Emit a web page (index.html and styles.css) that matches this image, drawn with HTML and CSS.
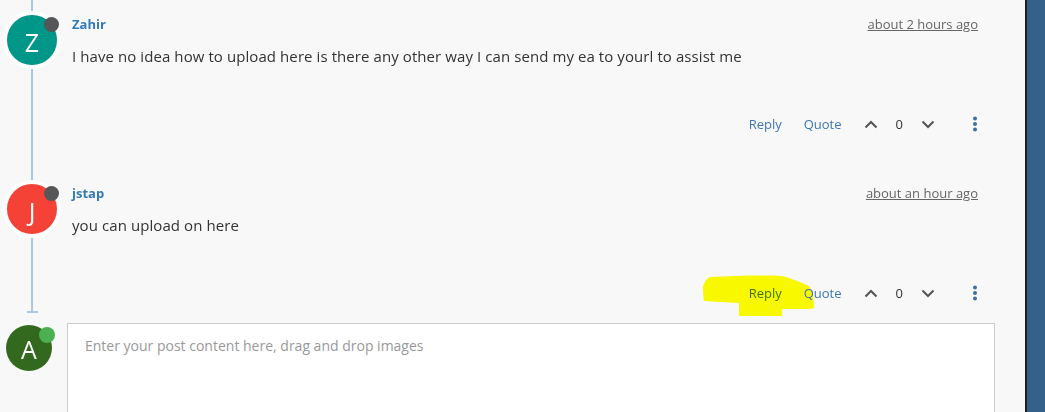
FILE: index.html
```html
<!DOCTYPE html>
<html lang="en">
  <head>
    <meta charset="UTF-8" />
    <meta name="viewport" content="width=device-width, initial-scale=1.0" />
    <title>Topic</title>
    <link rel="stylesheet" href="styles.css">
  </head>
  <body>
    <div class="page">
      <main class="topic">
        <div class="thread">
          <article class="post">
            <div class="avatar avatar-teal">
              <span>Z</span>
              <i class="status"></i>
            </div>
            <div class="post-body">
              <div class="post-head">
                <a class="author" href="#">Zahir</a>
                <a class="time" href="#">about 2 hours ago</a>
              </div>
              <p class="post-text">I have no idea how to upload here is there any other way I can send my ea to yourl to assist me</p>
              <div class="post-actions">
                <a class="action" href="#">Reply</a>
                <a class="action" href="#">Quote</a>
                <div class="votes">
                  <svg class="chevron" width="14" height="9" viewBox="0 0 14 9"><polyline points="1.5,7.5 7,2 12.5,7.5" /></svg>
                  <span class="count">0</span>
                  <svg class="chevron" width="14" height="9" viewBox="0 0 14 9"><polyline points="1.5,1.5 7,7 12.5,1.5" /></svg>
                </div>
                <svg class="kebab" width="4" height="16" viewBox="0 0 4 16"><circle cx="2" cy="2.5" r="2" /><circle cx="2" cy="8" r="2" /><circle cx="2" cy="13.5" r="2" /></svg>
              </div>
            </div>
          </article>

          <article class="post">
            <div class="avatar avatar-red">
              <span>J</span>
              <i class="status"></i>
            </div>
            <div class="post-body">
              <div class="post-head">
                <a class="author" href="#">jstap</a>
                <a class="time" href="#">about an hour ago</a>
              </div>
              <p class="post-text">you can upload on here</p>
              <div class="post-actions">
                <a class="action" href="#">Reply
                  <svg class="highlight" width="113" height="42" viewBox="0 0 113 42"><path d="M8 2 C30 1 60 0 80 1 C88 3 98 7 107 11 C110 15 112 24 112 33 L108 34 L80 34 L80 41 L37 41 L37 28 C25 27 12 27 2 26 C1 20 1 15 1 11 C3 6 5 3 8 2 Z" /></svg>
                </a>
                <a class="action" href="#">Quote</a>
                <div class="votes">
                  <svg class="chevron" width="14" height="9" viewBox="0 0 14 9"><polyline points="1.5,7.5 7,2 12.5,7.5" /></svg>
                  <span class="count">0</span>
                  <svg class="chevron" width="14" height="9" viewBox="0 0 14 9"><polyline points="1.5,1.5 7,7 12.5,1.5" /></svg>
                </div>
                <svg class="kebab" width="4" height="16" viewBox="0 0 4 16"><circle cx="2" cy="2.5" r="2" /><circle cx="2" cy="8" r="2" /><circle cx="2" cy="13.5" r="2" /></svg>
              </div>
            </div>
          </article>
        </div>

        <div class="composer">
          <div class="avatar avatar-green">
            <span>A</span>
            <i class="status online"></i>
          </div>
          <textarea class="editor" placeholder="Enter your post content here, drag and drop images"></textarea>
        </div>
      </main>
      <aside class="sidebar"></aside>
    </div>
  </body>
</html>
```

FILE: styles.css
```css
html {
  height: 100%;
}
body {
  height: 100%;
  margin: 0;
  font-family: "Open Sans", "Noto Sans", sans-serif;
  color: #333;
}

.page {
  height: 100%;
  display: flex;
  overflow: hidden;
}

.topic {
  flex: 1;
  background: #f8f8f8;
  border-right: 2px solid #1d1f21;
}

.sidebar {
  width: 18px;
  background: #34618a;
}

/* thread line behind avatars */
.thread {
  position: relative;
  padding-bottom: 10px;
}
.thread::before {
  content: "";
  position: absolute;
  left: 31px;
  top: 0;
  bottom: 0;
  width: 2px;
  background: #a8c8e6;
}
.thread::after {
  content: "";
  position: absolute;
  left: 27px;
  bottom: 0;
  width: 11px;
  height: 2px;
  background: #a8c8e6;
}

.post {
  display: flex;
  gap: 11px;
  padding: 11px 47px 0 3px;
}
.post + .post {
  margin-top: 35px;
}

.avatar {
  position: relative;
  z-index: 1;
  flex: none;
  width: 50px;
  height: 50px;
  border: 4px solid #fff;
  border-radius: 50%;
  display: flex;
  align-items: center;
  justify-content: center;
  color: #fff;
  font-size: 25px;
  line-height: 1;
}
.avatar span {
  padding-top: 4px;
}
.avatar-teal {
  background: #009688;
}
.avatar-red {
  background: #f44336;
}
.avatar-green {
  width: 46px;
  height: 46px;
  border: 0;
  margin-top: 2px;
  background: #33691e;
}
.avatar-green span {
  padding-top: 2px;
}

.status {
  position: absolute;
  top: 2px;
  left: 37px;
  width: 15px;
  height: 15px;
  border-radius: 50%;
  background: #555658;
}
.status.online {
  top: 2px;
  left: 33px;
  width: 16px;
  height: 16px;
  background: #4caf50;
}

.post-body {
  flex: 1;
  padding-top: 4px;
}

.post-head {
  display: flex;
  justify-content: space-between;
  font-size: 13px;
  line-height: 18px;
}
.author {
  color: #337ab7;
  font-weight: 700;
  text-decoration: none;
}
.time {
  color: #666;
  text-decoration: underline;
}

.post-text {
  margin: 12px 0 0;
  font-size: 15px;
  line-height: 22px;
  letter-spacing: 0.08px;
}

.post-actions {
  display: flex;
  justify-content: flex-end;
  align-items: center;
  margin-top: 47px;
  height: 20px;
  font-size: 13px;
}
.action {
  position: relative;
  color: #3d77b3;
  text-decoration: none;
  margin-right: 22px;
}
.votes {
  display: flex;
  align-items: center;
  gap: 18px;
  margin-right: 38px;
}
.chevron polyline {
  fill: none;
  stroke: #555;
  stroke-width: 2;
}
.count {
  font-size: 13px;
  color: #333;
}
.kebab {
  margin-right: 1px;
  fill: #3d6fa8;
}

/* marker highlight drawn over the reply link */
.highlight {
  position: absolute;
  left: -47px;
  top: -9px;
  fill: #ffff00;
  mix-blend-mode: multiply;
  pointer-events: none;
}

.composer {
  display: flex;
  gap: 15px;
  margin-top: 10px;
  padding: 0 30px 0 6px;
}
.editor {
  flex: 1;
  height: 120px;
  margin: 0;
  padding: 12px 17px;
  border: 1px solid #ccc;
  border-bottom: 0;
  background: #fff;
  resize: none;
  font-family: "Open Sans", "Noto Sans", sans-serif;
  font-size: 14px;
  line-height: 20px;
}
.editor::placeholder {
  color: #999;
}
```
